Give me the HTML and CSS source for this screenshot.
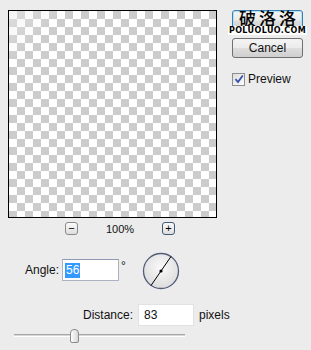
FILE: index.html
```html
<!DOCTYPE html>
<html lang="en">
<head>
    <meta charset="UTF-8" />
    <title>Motion Blur</title>
    <link rel="stylesheet" href="styles.css">
</head>
<body>
    <div class="dialog">
        <div class="main-col">
            <div class="preview"></div>

            <div class="zoom-bar">
                <span class="zoom-btn minus">−</span>
                <span class="zoom-value">100%</span>
                <span class="zoom-btn plus">+</span>
            </div>

            <div class="angle-row">
                <label class="field-label angle-label">Angle:</label>
                <div class="text-field angle-field"><span class="selected-text">56</span></div>
                <span class="degree">°</span>
                <svg class="dial" width="38" height="38" viewBox="0 0 38 38">
                    <defs>
                        <radialGradient id="dialFill" cx="50%" cy="40%" r="60%">
                            <stop offset="0" stop-color="#fafafa" />
                            <stop offset="1" stop-color="#dcdcdc" />
                        </radialGradient>
                    </defs>
                    <circle cx="19" cy="19" r="17.5" fill="url(#dialFill)" stroke="#525d78" stroke-width="1.3" />
                    <line x1="9" y1="33.5" x2="29" y2="4.5" stroke="#000" stroke-width="1" />
                    <circle cx="19" cy="19" r="1.6" fill="#000" />
                </svg>
            </div>

            <div class="distance-row">
                <label class="field-label distance-label">Distance:</label>
                <div class="text-field distance-field">83</div>
                <span class="unit">pixels</span>
            </div>

            <div class="slider">
                <div class="slider-track"></div>
                <div class="slider-thumb"></div>
            </div>
        </div>

        <div class="side-col">
            <div class="btn btn-default">
                <span class="ok-text">OK</span>
                <div class="watermark">
                    <span class="wm-cn">破洛洛</span>
                    <span class="wm-en">POLUOLUO.COM</span>
                </div>
            </div>
            <div class="btn">Cancel</div>
            <div class="check-row">
                <span class="checkbox">
                    <svg width="10" height="10" viewBox="0 0 10 10">
                        <path d="M1.5 5.2 L4 8 L8.8 1.5" fill="none" stroke="#3a4fa8" stroke-width="1.8" />
                    </svg>
                </span>
                <span class="check-label">Preview</span>
            </div>
        </div>
    </div>
</body>
</html>
```

FILE: styles.css
```css
* {
    box-sizing: border-box;
    margin: 0;
    padding: 0;
}

body {
    background: #ececec;
    color: #111;
    font-family: 'Liberation Sans', Arial, sans-serif;
    font-size: 12px;
}

.dialog {
    display: flex;
    padding: 10px 0 0 8px;
    width: 311px;
    height: 350px;
}

.main-col {
    width: 209px;
    flex-shrink: 0;
    display: flex;
    flex-direction: column;
}

.preview {
    width: 209px;
    height: 208px;
    border: 1px solid #000;
    background-color: #fff;
    background-image:
        linear-gradient(135deg, rgba(236,236,236,.55), rgba(255,255,255,0) 40px),
        conic-gradient(#ccc 25%, #fff 0 50%, #ccc 0 75%, #fff 0);
    background-size: 100% 100%, 16px 16px;
    background-position: 0 0, 0 0;
}

.zoom-bar {
    display: flex;
    align-items: center;
    height: 13px;
    margin-top: 4px;
    padding-left: 57px;
}

.zoom-btn {
    width: 13px;
    height: 13px;
    border: 1px solid #8a8a8a;
    border-radius: 3px;
    background: linear-gradient(#fafafa, #dedede);
    font-size: 11px;
    line-height: 10px;
    text-align: center;
    color: #000;
}

.zoom-btn.plus {
    border-color: #405a7a;
    margin-left: 27px;
}

.zoom-value {
    margin-left: 27px;
    width: 30px;
    font-size: 11px;
    text-align: center;
}

.angle-row {
    display: flex;
    align-items: center;
    height: 22px;
    margin-top: 24px;
}

.angle-row > *,
.distance-row > * {
    flex-shrink: 0;
}

.field-label {
    text-align: right;
    padding-right: 3px;
}

.angle-label {
    width: 54px;
}

.text-field {
    height: 22px;
    background: #fff;
    border: 1px solid #abb3c0;
    border-top-color: #8f9bb0;
    padding: 3px 2px 0;
    font-size: 12px;
}

.angle-field {
    width: 57px;
}

.selected-text {
    display: inline-block;
    background: #3399ff;
    color: #fff;
    padding: 0 1px;
    line-height: 15px;
}

.degree {
    align-self: flex-start;
    margin-left: 2px;
    font-size: 12px;
}

.dial {
    margin-left: 16px;
    margin-top: 2px;
}

.distance-row {
    display: flex;
    align-items: center;
    height: 22px;
    margin-top: 23px;
}

.distance-label {
    width: 130px;
    padding-right: 5px;
}

.distance-field {
    width: 56px;
    border-color: #e2e2e2;
    padding-left: 5px;
}

.unit {
    margin-left: 5px;
}

.slider {
    position: relative;
    height: 14px;
    margin-top: 3px;
    margin-left: 6px;
    width: 171px;
}

.slider-track {
    margin-top: 5px;
    height: 3px;
    border-top: 1px solid #a8a8a8;
    border-bottom: 1px solid #fff;
    background: #d6d6d6;
}

.slider-thumb {
    position: absolute;
    left: 56px;
    top: 0;
    width: 9px;
    height: 14px;
    border: 1px solid #8c8c8c;
    border-radius: 4px 4px 2px 2px;
    background: linear-gradient(90deg, #fdfdfd, #d8d8d8);
}

.side-col {
    width: 71px;
    margin-left: 15px;
    display: flex;
    flex-direction: column;
}

.btn {
    position: relative;
    height: 20px;
    border: 1px solid #707070;
    border-radius: 3px;
    background: linear-gradient(#f4f4f4 0%, #ebebeb 48%, #dddddd 52%, #cfcfcf 100%);
    text-align: center;
    line-height: 18px;
    font-size: 12px;
    margin-top: 7px;
}

.btn-default {
    height: 21px;
    margin-top: 0;
    border-color: #3c7fb1;
    box-shadow: inset 0 0 0 1px #b3e2f7;
}

.ok-text {
    color: #888;
    visibility: hidden;
}

.watermark {
    position: absolute;
    left: -3px;
    right: -3px;
    top: -1px;
    display: flex;
    flex-direction: column;
    align-items: center;
    color: #000;
}

.wm-cn {
    font-family: 'Noto Sans CJK SC', sans-serif;
    font-size: 17px;
    font-weight: 500;
    line-height: 16px;
    letter-spacing: 3px;
    padding-left: 3px;
}

.wm-en {
    font-family: 'DejaVu Sans', sans-serif;
    font-size: 8px;
    font-weight: 700;
    line-height: 9px;
    letter-spacing: 0.4px;
    background: #fff;
    padding: 0 1px;
}

.check-row {
    display: flex;
    align-items: center;
    margin-top: 14px;
}

.checkbox {
    width: 13px;
    height: 13px;
    border: 1px solid #8e8f8f;
    background: linear-gradient(135deg, #dcdcdc, #fefefe);
    display: flex;
    align-items: center;
    justify-content: center;
}

.check-label {
    margin-left: 3px;
}
```
